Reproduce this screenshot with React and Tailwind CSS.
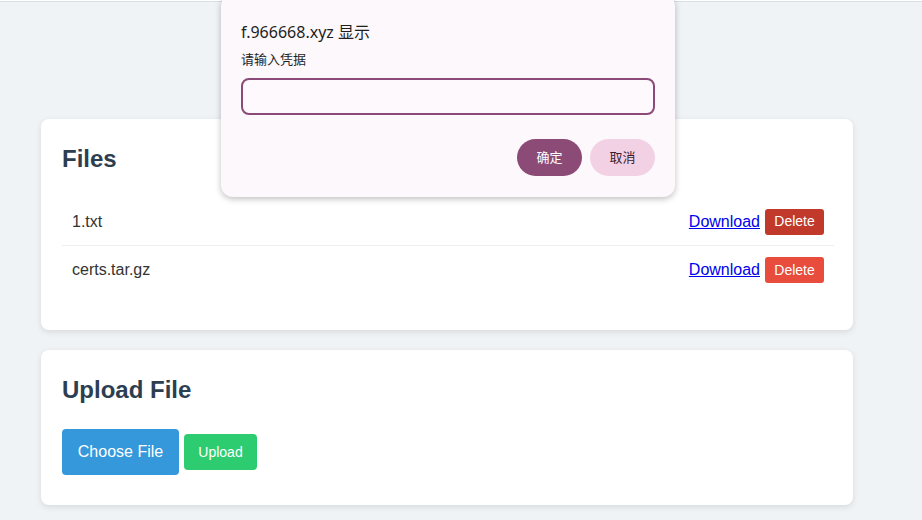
export default function App() {
  const files = [
    { name: "1.txt", del: "bg-[#c0392b]" },
    { name: "certs.tar.gz", del: "bg-[#e74c3c]" },
  ];
  return (
    <div className="relative w-[922px] h-[520px] overflow-hidden bg-[#eff3f6]" style={{ fontFamily: '"Liberation Sans", Arial, sans-serif' }}>
      <div className="h-px bg-white" />
      <div className="h-px bg-[#dcdfe2]" />
      <div className="pl-[41px] pt-[117px] w-[853px]">
        <div className="bg-white rounded-lg shadow-[0_2px_6px_rgba(0,0,0,0.1)] pl-[21px] pr-[19px] pt-[25px] pb-[36px]">
          <h2 className="text-[24px] leading-[30px] font-bold text-[#2c3e50]">Files</h2>
          <ul className="mt-[24px]">
            {files.map((f, i) => (
              <li key={f.name} className={`flex items-center justify-between h-[48px] pl-[10px] pr-[10px] ${i === 0 ? "border-b border-[#eeeeee]" : ""}`}>
                <span className="text-[16px] text-[#333]">{f.name}</span>
                <span className="flex items-center">
                  <a href="#" className="text-[16px] text-[#0000ee] underline mr-[5px]">Download</a>
                  <button className={`${f.del} text-white text-[14px] rounded-[3px] w-[59px] h-[26px]`}>Delete</button>
                </span>
              </li>
            ))}
          </ul>
        </div>
        <div className="mt-[20px] bg-white rounded-lg shadow-[0_2px_6px_rgba(0,0,0,0.1)] pl-[21px] pr-[19px] pt-[25px] pb-[30px]">
          <h2 className="text-[24px] leading-[30px] font-bold text-[#2c3e50]">Upload File</h2>
          <div className="mt-[24px] flex items-center">
            <button className="bg-[#3498db] text-white text-[16px] rounded-[4px] w-[117px] h-[46px]">Choose File</button>
            <button className="ml-[5px] bg-[#2ecc71] text-white text-[14px] rounded-[4px] w-[73px] h-[36px]">Upload</button>
          </div>
        </div>
      </div>
      <div className="absolute left-[221px] top-[-6px] w-[454px] h-[203px] rounded-xl bg-[#fcf8fb] shadow-[0_2px_6px_rgba(0,0,0,0.25)] px-[20px] pt-[26px]" style={{ fontFamily: '"Noto Sans", "Noto Sans CJK SC", sans-serif' }}>
        <div className="text-[16px] leading-[24px] text-[#1f1f1f]">f.966668.xyz 显示</div>
        <div className="mt-[6px] text-[13px] leading-[18px] text-[#1f1f1f]">请输入凭据</div>
        <div className="mt-[10px] h-[37px] rounded-[8px] border-2 border-[#8c4a78] bg-[#fdf9fc]" />
        <div className="mt-[24px] flex justify-end gap-[8px]">
          <button className="w-[65px] h-[37px] rounded-full bg-[#8c4a76] text-white text-[13px]">确定</button>
          <button className="w-[65px] h-[37px] rounded-full bg-[#f3d1e4] text-[#3a1d30] text-[13px]">取消</button>
        </div>
      </div>
    </div>
  );
}
